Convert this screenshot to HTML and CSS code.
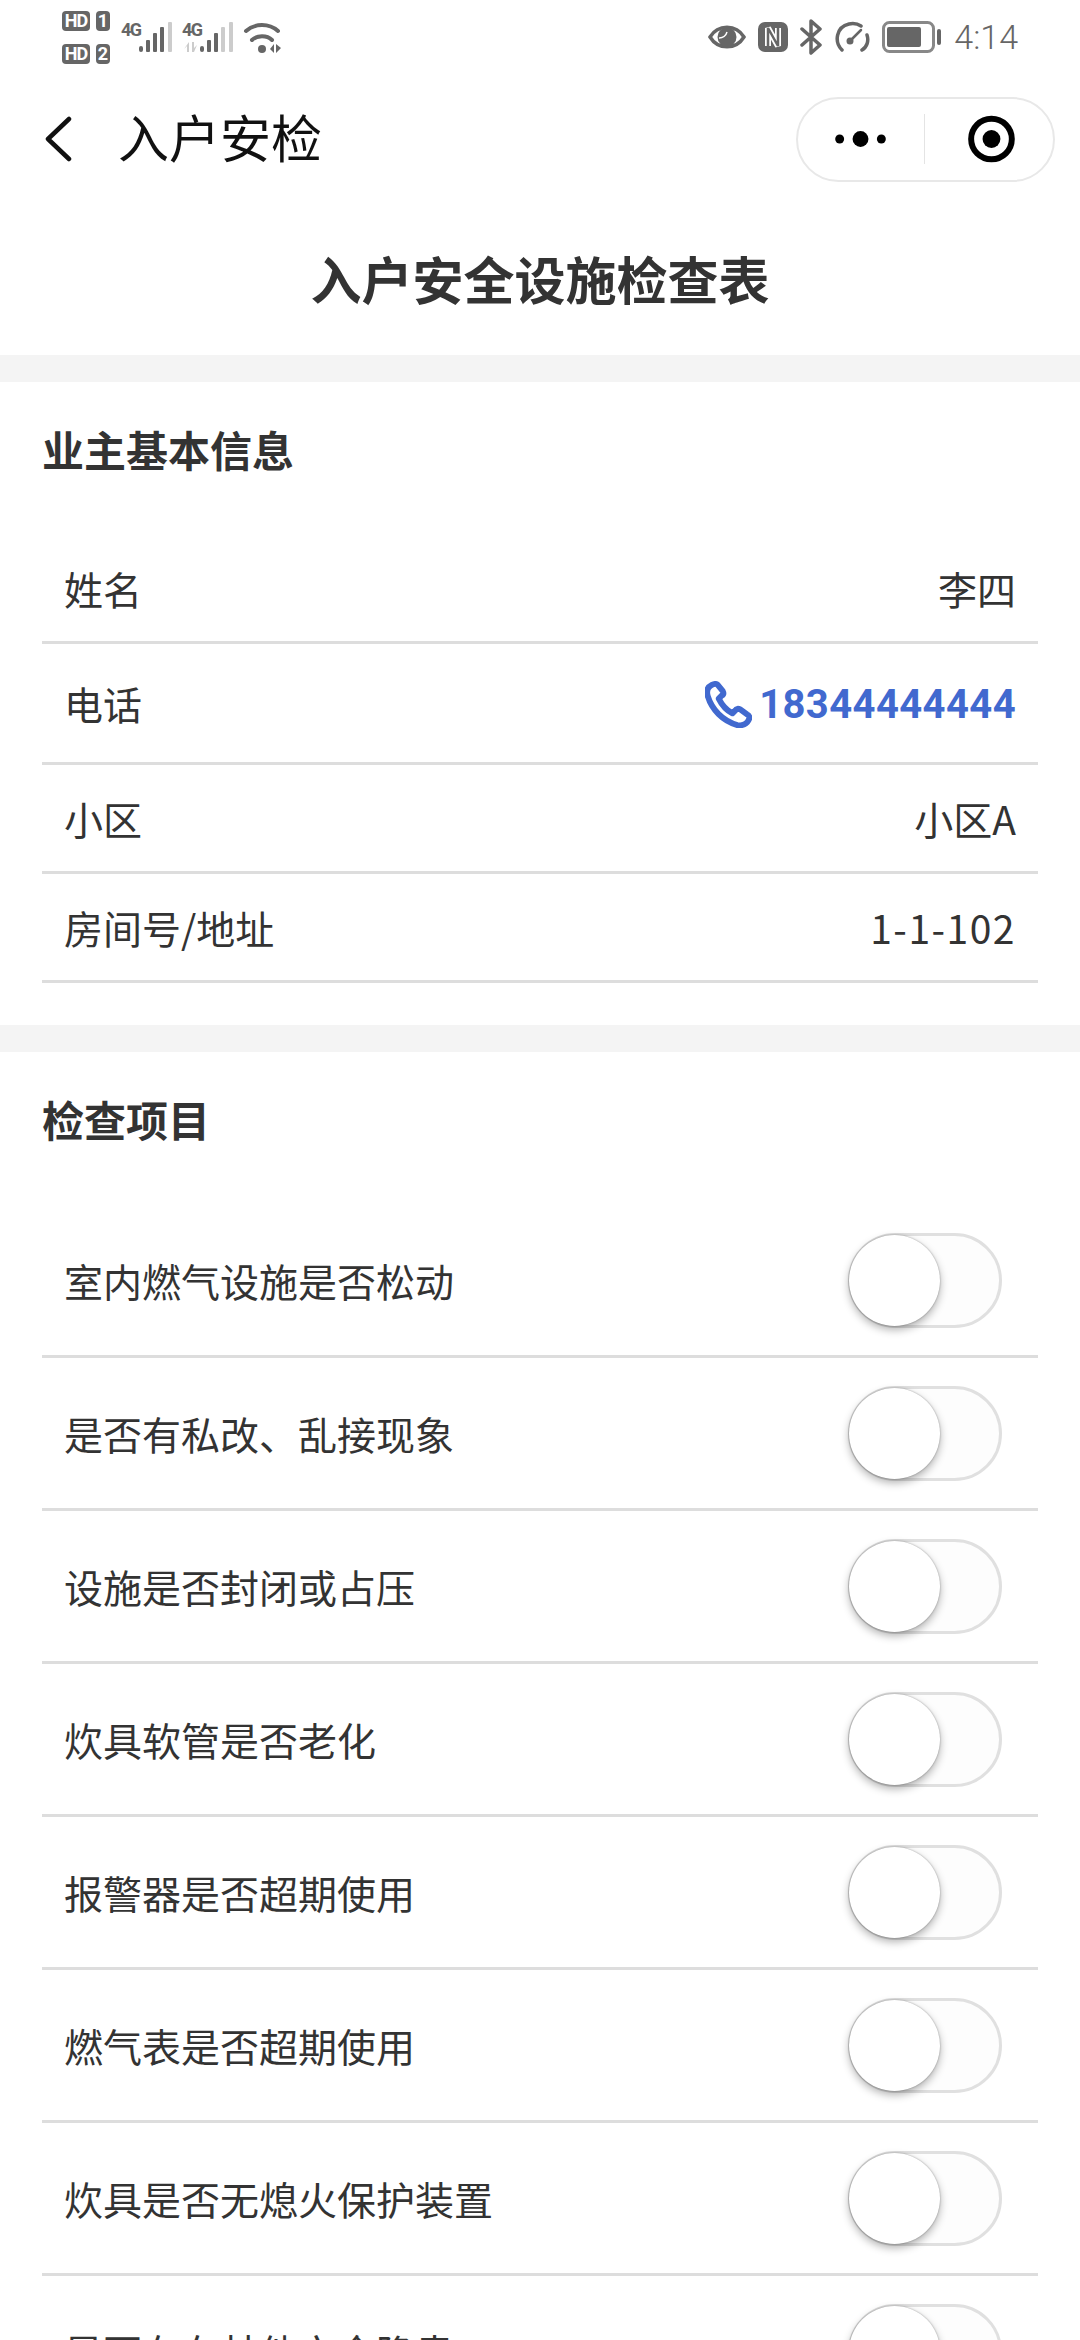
FILE: index.html
```html
<!DOCTYPE html>
<html lang="zh-CN"><head>
	<meta charset="UTF-8">
	<title>入户安检</title>
	<link rel="stylesheet" href="styles.css">
</head>

<body>
	<div class="statusbar">
		<div class="status_left">
			<div class="hd_stack">
				<div class="hd_line"><span class="hd_tag">HD</span><span class="hd_num">1</span></div>
				<div class="hd_line"><span class="hd_tag">HD</span><span class="hd_num">2</span></div>
			</div>
			<div class="signal">
				<span class="net">4G</span>
				<svg width="34" height="32" viewBox="0 0 34 32">
					<rect x="0" y="24" width="4" height="6" rx="2" fill="#666"/>
					<rect x="7" y="18" width="4" height="12" rx="1" fill="#666"/>
					<rect x="14" y="11" width="4" height="19" rx="1" fill="#666"/>
					<rect x="21" y="5" width="4" height="25" rx="1" fill="#666"/>
					<rect x="29" y="0" width="4" height="30" rx="1" fill="#ccc"/>
				</svg>
			</div>
			<div class="signal">
				<span class="net">4G</span>
				<svg width="34" height="32" viewBox="0 0 34 32">
					<rect x="0" y="24" width="4" height="6" rx="2" fill="#666"/>
					<rect x="7" y="18" width="4" height="12" rx="1" fill="#666"/>
					<rect x="14" y="11" width="4" height="19" rx="1" fill="#666"/>
					<rect x="21" y="5" width="4" height="25" rx="1" fill="#ccc"/>
					<rect x="29" y="0" width="4" height="30" rx="1" fill="#ccc"/>
				</svg>
				<svg class="updown" width="14" height="10" viewBox="0 0 14 10">
					<path d="M5 0V10H3V4L0 7ZM8 0H10V6L13 3L10 10H8Z" fill="#ccc"/>
				</svg>
			</div>
			<svg class="wifi" width="40" height="32" viewBox="0 0 40 32" fill="none" stroke="#666" stroke-width="4" stroke-linecap="round">
				<path d="M3 9C12 1 26 1 35 9"/>
				<path d="M9 18C14 13 24 13 29 18"/>
				<circle cx="19" cy="27" r="4" fill="#666" stroke="none"/>
				<path d="M31 22V31L27 27ZM33 22V31L38 26Z" fill="#666" stroke="none"/>
			</svg>
		</div>
		<div class="status_right">
			<svg width="38" height="28" viewBox="0 0 38 28">
				<path d="M2 14C10 1 28 1 36 14C28 27 10 27 2 14Z" fill="none" stroke="#666" stroke-width="3.5"/>
				<circle cx="19" cy="14" r="9.5" fill="#666"/>
				<path d="M11 15A8 8 0 0 0 19 9" fill="none" stroke="#fff" stroke-width="1.5"/>
			</svg>
			<svg width="30" height="30" viewBox="0 0 30 30">
				<rect width="30" height="30" rx="7" fill="#666"/>
				<path d="M10 24V6L20 24V6" fill="none" stroke="#fff" stroke-width="6" stroke-linejoin="bevel"/>
				<path d="M10 24V6L20 24V6" fill="none" stroke="#666" stroke-width="2.5" stroke-linejoin="bevel"/>
			</svg>
			<svg width="22" height="36" viewBox="0 0 22 36" fill="none" stroke="#666" stroke-width="3.5" stroke-linejoin="round" stroke-linecap="round">
				<path d="M2 10L20 26L11 34V2L20 10L2 26"/>
			</svg>
			<svg width="36" height="32" viewBox="0 0 36 32" fill="none" stroke="#666" stroke-width="3.5" stroke-linecap="round">
				<path d="M8 29C0 21 2 6 15 3C20 2 24 3 27 5"/>
				<path d="M28 29C33 26 35 20 33 14"/>
				<path d="M17 19L27 9" stroke-width="2.5"/>
				<circle cx="16" cy="20" r="3.5" fill="#666" stroke="none"/>
			</svg>
			<svg width="60" height="32" viewBox="0 0 60 32">
				<rect x="1.5" y="1.5" width="50" height="29" rx="6" fill="none" stroke="#888" stroke-width="3"/>
				<rect x="5" y="6" width="34" height="20" rx="2" fill="#666"/>
				<rect x="55" y="8" width="4" height="16" rx="2" fill="#666"/>
			</svg>
			<span class="clock">4:14</span>
		</div>
	</div>

	<div class="navbar">
		<svg class="back" width="28" height="46" viewBox="0 0 28 46" fill="none" stroke="#111" stroke-width="4.5" stroke-linecap="round" stroke-linejoin="round">
			<path d="M25 3L4 23L25 43"/>
		</svg>
		<span class="nav_title">入户安检</span>
		<div class="capsule">
			<svg class="more" width="127" height="20" viewBox="0 0 127 20">
				<circle cx="42" cy="10" r="4.5" fill="#000"/>
				<circle cx="63" cy="10" r="8" fill="#000"/>
				<circle cx="84" cy="10" r="4.5" fill="#000"/>
			</svg>
			<div class="capsule_line"></div>
			<svg class="target" width="129" height="50" viewBox="0 0 129 50">
				<circle cx="67" cy="25" r="20.5" fill="none" stroke="#000" stroke-width="6"/>
				<circle cx="67" cy="25" r="9" fill="#000"/>
			</svg>
		</div>
	</div>

	<div class="page_title">入户安全设施检查表</div>

	<div class="band"></div>

	<div class="section first">
		<div class="section_title">业主基本信息</div>
		<div class="row info"><span>姓名</span><span>李四</span></div>
		<div class="row info phone_row">
			<span>电话</span>
			<span class="phone">
				<svg width="47" height="47" viewBox="0 0 48 48" fill="none" stroke="#4169cf" stroke-width="6" stroke-linejoin="round">
					<path d="M7 4C3 6 1 10 3 16C7 29 18 41 33 45C38 46 43 44 45 39C46 37 45 35 43 34L36 29C34 28 32 28 31 30L28 33C22 30 17 24 14 18L17 15C19 14 19 12 18 10L13 4C11 2 9 3 7 4Z"/>
				</svg>
				18344444444
			</span>
		</div>
		<div class="row info"><span>小区</span><span>小区A</span></div>
		<div class="row info"><span>房间号/地址</span><span class="addr">1-1-102</span></div>
	</div>

	<div class="band"></div>

	<div class="section">
		<div class="section_title second">检查项目</div>
		<div class="row check"><span>室内燃气设施是否松动</span><div class="toggle"><div class="knob"></div></div></div>
		<div class="row check"><span>是否有私改、乱接现象</span><div class="toggle"><div class="knob"></div></div></div>
		<div class="row check"><span>设施是否封闭或占压</span><div class="toggle"><div class="knob"></div></div></div>
		<div class="row check"><span>炊具软管是否老化</span><div class="toggle"><div class="knob"></div></div></div>
		<div class="row check"><span>报警器是否超期使用</span><div class="toggle"><div class="knob"></div></div></div>
		<div class="row check"><span>燃气表是否超期使用</span><div class="toggle"><div class="knob"></div></div></div>
		<div class="row check"><span>炊具是否无熄火保护装置</span><div class="toggle"><div class="knob"></div></div></div>
		<div class="row check"><span>是否存在其他安全隐患</span><div class="toggle"><div class="knob"></div></div></div>
	</div>
</body></html>
```

FILE: styles.css
```css
* {
	box-sizing: border-box;
}
html, body {
	margin: 0;
	height: 2340px;
	overflow: hidden;
}
body {
	background-color: #fff;
	color: #333;
	font-family: "Noto Sans CJK SC", Roboto, sans-serif;
}

/* status bar */
.statusbar {
	height: 78px;
	padding: 8px 62px 0 62px;
	display: flex;
	justify-content: space-between;
	align-items: flex-start;
	font-family: Roboto, sans-serif;
}
.status_left {
	display: flex;
	align-items: flex-start;
}
.hd_stack {
	display: flex;
	flex-direction: column;
	gap: 13px;
	margin-top: 3px;
	width: 59px;
}
.hd_line {
	display: flex;
	gap: 6px;
}
.hd_tag, .hd_num {
	height: 20px;
	background-color: #666;
	color: #fff;
	border-radius: 4px;
	font-size: 18px;
	font-weight: 700;
	line-height: 20px;
	text-align: center;
}
.hd_tag {
	width: 28px;
	letter-spacing: -1px;
}
.hd_num {
	width: 14px;
}
.signal {
	position: relative;
	display: flex;
	align-items: flex-start;
	width: 61px;
	margin-top: 14px;
}
.net {
	width: 18px;
	color: #666;
	font-size: 18px;
	font-weight: 700;
	line-height: 16px;
	letter-spacing: -1.5px;
}
/* little arrows under the second 4G */
.updown {
	position: absolute;
	left: 2px;
	top: 20px;
}
.wifi {
	margin: 14px 0 0 0;
}
.status_right {
	display: flex;
	align-items: center;
	gap: 12px;
	height: 54px;
	margin-top: 2px;
}
.clock {
	color: #666;
	font-size: 34px;
	font-weight: 300;
}

/* nav */
.navbar {
	height: 122px;
	display: flex;
	align-items: center;
	padding: 0 25px 0 44px;
}
.back {
	margin-right: 46px;
}
.nav_title {
	color: #111;
	font-size: 51px;
	line-height: 60px;
	padding-bottom: 6px;
}
.capsule {
	margin-left: auto;
	width: 259px;
	height: 85px;
	border: 2px solid #e8e8e8;
	border-radius: 43px;
	display: flex;
	align-items: center;
}
.capsule_line {
	width: 1px;
	height: 50px;
	background-color: #e4e4e4;
}

.page_title {
	height: 155px;
	text-align: center;
	font-size: 51px;
	font-weight: 700;
	line-height: 157px;
	color: #333;
}
.band {
	height: 27px;
	background-color: #f4f4f4;
}

/* sections */
.section.first {
	padding-bottom: 42px;
}
.section_title {
	height: 153px;
	padding: 38px 0 0 42px;
	font-size: 42px;
	font-weight: 700;
	line-height: 58px;
	color: #333;
}
.section_title.second {
	height: 153px;
}
.row {
	margin: 0 42px;
	padding: 0 22px;
	border-bottom: 3px solid #ddd;
	display: flex;
	justify-content: space-between;
	align-items: center;
	font-size: 39px;
	color: #333;
}
.info {
	height: 109px;
}
.phone_row {
	height: 121px;
}
.phone {
	display: flex;
	align-items: center;
	gap: 7px;
	padding-top: 2px;
	color: #4169cf;
	font-family: Roboto, sans-serif;
	font-size: 40px;
	font-weight: 700;
	letter-spacing: 0.4px;
}
.addr {
	letter-spacing: 1.5px;
}
.check {
	height: 153px;
}

/* switch, always off here */
.toggle {
	position: relative;
	width: 154px;
	height: 95px;
	margin-right: 14px;
	background-color: #fdfdfd;
	border: 3px solid #e0e0e0;
	border-radius: 48px;
}
.knob {
	position: absolute;
	left: -2px;
	top: -1px;
	width: 91px;
	height: 91px;
	background-color: #fff;
	border-radius: 50%;
	box-shadow: 0 4px 8px rgba(0,0,0,.3), 0 0 2px rgba(0,0,0,.35);
}
```
